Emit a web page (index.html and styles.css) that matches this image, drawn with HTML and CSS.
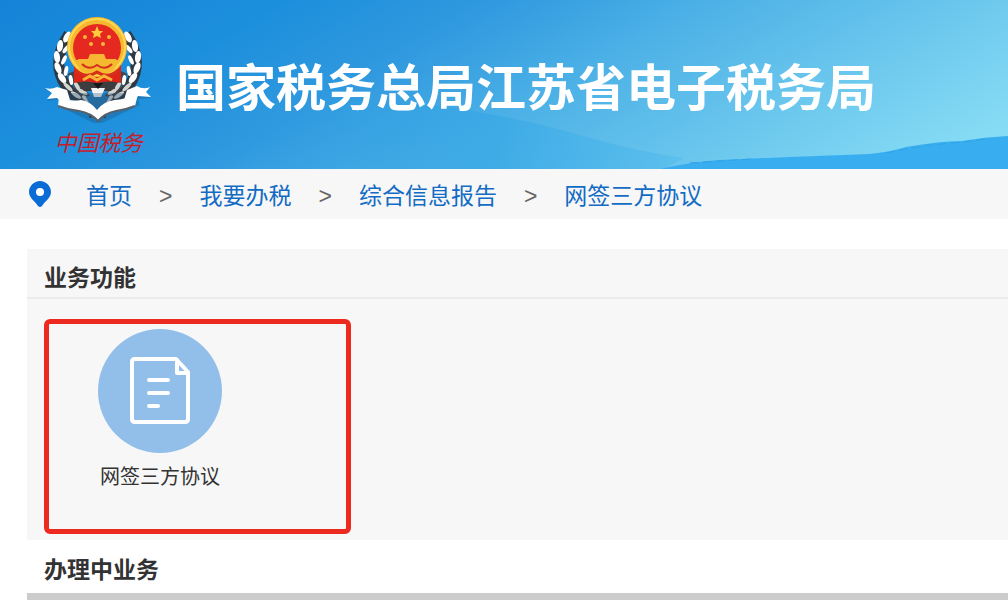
FILE: index.html
```html
<!DOCTYPE html>
<html lang="zh-CN">
<head>
    <meta charset="UTF-8">
    <meta name="viewport" content="width=device-width, initial-scale=1.0">
    <title>国家税务总局江苏省电子税务局</title>
    <link rel="stylesheet" href="styles.css">
</head>
<body>

    <header class="header">
        <svg class="hills" viewBox="0 0 1008 169" preserveAspectRatio="none" aria-hidden="true">
            <defs>
                <linearGradient id="slope" x1="0" y1="0" x2="1" y2="0">
                    <stop offset="0" stop-color="#2b98df" stop-opacity="0"/>
                    <stop offset="0.6" stop-color="#36a6e5" stop-opacity="0.7"/>
                    <stop offset="1" stop-color="#5abfed" stop-opacity="0.8"/>
                </linearGradient>
            </defs>
            <path d="M200 169V110Q330 92 440 106Q520 117 590 138Q640 152 684 158L664 169Z" fill="url(#slope)"/>
            <path d="M660 169Q690 162 720 160L790 157L870 154Q890 152 906 147Q940 141 962 141Q985 137 1008 136V169Z" fill="#38aef0"/>
            <path d="M690 163L720 161L752 159M886 153L906 149L932 145L962 142L985 139" fill="none" stroke="#2fa3e6" stroke-width="1" stroke-dasharray="9 4"/>
        </svg>

        <div class="brand">
            <svg class="emblem" viewBox="0 0 107 106" aria-hidden="true">
                <defs>
                    <g id="wreath">
                        <path d="M24 17Q5 45 21 69Q32 86 62 96" fill="none" stroke="#2f3942" stroke-width="11"/>
                        <path d="M27 55Q36 78 52 94" fill="none" stroke="#43474b" stroke-width="9"/>
                        <g fill="#fff">
                            <ellipse cx="22" cy="20" rx="3" ry="6" transform="rotate(28 22 20)"/>
                            <ellipse cx="15" cy="29" rx="3" ry="6" transform="rotate(8 15 29)"/>
                            <ellipse cx="21" cy="32" rx="2" ry="5" transform="rotate(38 21 32)"/>
                            <ellipse cx="12" cy="40" rx="3" ry="6" transform="rotate(-8 12 40)"/>
                            <ellipse cx="19" cy="43" rx="2" ry="5" transform="rotate(25 19 43)"/>
                            <ellipse cx="13" cy="51" rx="3" ry="6" transform="rotate(-22 13 51)"/>
                            <ellipse cx="21" cy="54" rx="2" ry="5" transform="rotate(12 21 54)"/>
                            <ellipse cx="17" cy="61" rx="3" ry="6" transform="rotate(-36 17 61)"/>
                            <ellipse cx="26" cy="63" rx="2" ry="5" transform="rotate(-8 26 63)"/>
                        </g>
                        <g fill="#d3d3d0">
                            <ellipse cx="23" cy="70" rx="2" ry="6" transform="rotate(-48 23 70)"/>
                            <ellipse cx="32" cy="69" rx="2" ry="5" transform="rotate(-30 32 69)"/>
                            <ellipse cx="31" cy="78" rx="2" ry="6" transform="rotate(-56 31 78)"/>
                            <ellipse cx="38" cy="75" rx="2" ry="5" transform="rotate(-62 38 75)"/>
                            <ellipse cx="41" cy="82" rx="2" ry="5" transform="rotate(-50 41 82)"/>
                        </g>
                    </g>
                </defs>
                <use href="#wreath"/>
                <use href="#wreath" transform="translate(105 0) scale(-1 1)"/>
                <path d="M41 80Q52 75 64 80L60 88L52 93L45 88Z" fill="#2a79b3"/>
                <path d="M31 64H74L66 74H39Z" fill="#3b3d3f"/>
                <path d="M46 71H60L56 80H49Z" fill="#f4f4f4"/>
                <path d="M48 66L53 72L58 66Z" fill="#181818"/>

                <!-- national emblem -->
                <path d="M29 48H76V66Q64 63 52 66Q40 63 29 66Z" fill="#dd2419"/>
                <circle cx="52" cy="30" r="30" fill="#f5b92f"/>
                <circle cx="52" cy="30" r="28" fill="none" stroke="#ffd751" stroke-width="2"/>
                <circle cx="52" cy="31" r="24" fill="#e52920"/>
                <path d="M52 9L54 14H58L55 17L56 21L52 19L48 21L49 17L46 14H50Z" fill="#ffc93c"/>
                <g fill="#f8b435">
                    <circle cx="40" cy="20" r="2"/>
                    <circle cx="64" cy="20" r="2"/>
                    <circle cx="46" cy="27" r="2"/>
                    <circle cx="58" cy="27" r="2"/>
                    <path d="M43 42L45 37H59L61 42H71V46H33V42Z"/>
                </g>
                <path d="M29 43H75L68 54Q52 62 36 54Z" fill="#f5b92f"/>
                <path d="M37 47Q44 54 52 48Q60 54 67 47" fill="none" stroke="#d4301b" stroke-width="2"/>
                <path d="M31 54Q42 62 52 55Q62 62 73 54" fill="none" stroke="#d4301b" stroke-width="3"/>
                <path d="M38 63L45 59L52 63L59 59L67 63" fill="none" stroke="#f8b435" stroke-width="3"/>

                <!-- ribbon -->
                <path d="M2 84L16 82L14 89L32 98L53 108L76 97L95 88L93 82L106 81L96 76H10Z" fill="#1c4d75" opacity="0.3"/>
                <path d="M0 71Q6 73 12 70L22 73L25 83L16 85L12 81L2 82L7 76Z" fill="#fff"/>
                <path d="M105 70Q98 73 92 69L82 73L79 83L89 84L93 79L106 80L101 75Z" fill="#fff"/>
                <path d="M14 80Q25 85 36 83Q45 84 52 93Q59 84 70 83Q82 82 93 77L90 89Q80 93 71 94Q60 96 53 104Q46 96 34 94Q23 93 13 89Z" fill="#fff"/>
                <path d="M13 89Q23 93 34 94Q46 96 53 104Q60 96 71 94Q80 93 90 89" fill="none" stroke="#55616b" stroke-width="2"/>
            </svg>
            <span class="brand-name">中国税务</span>
        </div>

        <h1 class="title">国家税务总局江苏省电子税务局</h1>
    </header>

    <nav class="crumbs" aria-label="当前位置">
        <svg class="pin" viewBox="0 0 22 26" aria-hidden="true">
            <path d="M11 0C17 0 22 5 22 11C22 17 16 20 13 25Q11 27 9 25C6 20 0 17 0 11C0 5 5 0 11 0Z" fill="#0c6cd6"/>
            <circle cx="11" cy="11" r="4" fill="#fff"/>
        </svg>
        <ol>
            <li><a href="#">首页</a></li>
            <li><a href="#">我要办税</a></li>
            <li><a href="#">综合信息报告</a></li>
            <li><a href="#">网签三方协议</a></li>
        </ol>
    </nav>

    <main>
        <section class="panel">
            <h2>业务功能</h2>
            <div class="panel-body">
                <div class="tile">
                    <a href="#" class="service">
                        <svg viewBox="0 0 124 124" aria-hidden="true">
                            <circle cx="62" cy="62" r="62" fill="#92bfe9"/>
                            <g fill="none" stroke="#fff" stroke-width="4" stroke-linejoin="round" stroke-linecap="round">
                                <path d="M78 30H37Q34 30 34 33V90Q34 93 37 93H87Q90 93 90 90V43Z"/>
                                <path d="M79 31V44H90"/>
                                <path d="M51 51H70M51 64H70M51 77H60"/>
                            </g>
                        </svg>
                        <span>网签三方协议</span>
                    </a>
                </div>
            </div>
        </section>

        <section class="pending">
            <h2>办理中业务</h2>
        </section>
    </main>

</body>
</html>
```
FILE: styles.css
```css
*, *::after, *::before{
    margin: 0;
    padding: 0;
    box-sizing: border-box;
}
:root{
    --link-cl: #126bc4;
    --text-cl: #333;
    --panel-cl: #f7f7f7;
    --mark-cl: #ec2a1f;
}

body{
    background-color: #fff;
    color: var(--text-cl);
    font-family: "Noto Sans CJK SC", "Liberation Sans", sans-serif;
}
a{
    text-decoration: none;
}

/* header */
.header{
    position: relative;
    display: flex;
    align-items: center;
    gap: 24px;
    padding: 17px 45px 10px;
    background: linear-gradient(150deg, #1583d8 0%, #1c8fdc 22%, #3099df 38%, #4bb0e6 54%, #6ac6ed 74%, #86dcf4 94%);
}
.hills{
    position: absolute;
    top: 0;
    left: 0;
    width: 100%;
    height: 100%;
}
.brand{
    position: relative;
    display: flex;
    flex-direction: column;
    align-items: center;
}
.emblem{
    width: 107px;
    height: 106px;
}
.brand-name{
    font-size: 22px;
    font-style: italic;
    line-height: 36px;
    color: #c3202c;
}
.title{
    position: relative;
    padding-bottom: 8px;
    font-size: 50px;
    font-weight: bold;
    line-height: 60px;
    color: #fff;
}

/* breadcrumb */
.crumbs{
    display: flex;
    align-items: center;
    gap: 35px;
    min-height: 50px;
    padding: 0 29px;
    background-color: var(--panel-cl);
}
.pin{
    width: 22px;
    height: 26px;
}
.crumbs ol{
    display: flex;
    list-style: none;
    font-size: 23px;
    line-height: 32px;
}
.crumbs li + li::before{
    content: ">";
    margin: 0 27px;
    font-family: "Liberation Sans", sans-serif;
    font-size: 23px;
    line-height: 1;
    color: #666;
}
.crumbs a{
    color: var(--link-cl);
}
.crumbs a:hover{
    text-decoration: underline;
}

/* content */
main{
    padding: 30px 0 0 27px;
}
h2{
    padding: 0 17px;
    font-size: 23px;
    font-weight: bold;
}
.panel{
    background-color: var(--panel-cl);
}
.panel h2{
    padding-top: 10px;
    padding-bottom: 4px;
    line-height: 34px;
    border-bottom: 2px solid #ebebeb;
}
.panel-body{
    padding: 20px 17px 6px;
}
.tile{
    width: 307px;
    padding: 5px 49px 38px;
    border: 5px solid var(--mark-cl);
    border-radius: 6px;
}
.service{
    display: flex;
    flex-direction: column;
    align-items: center;
    gap: 8px;
    width: 124px;
    font-size: 20px;
    line-height: 30px;
    white-space: nowrap;
    color: var(--text-cl);
}
.service svg{
    width: 124px;
    height: 124px;
}
.pending h2{
    padding-top: 11px;
    padding-bottom: 8px;
    line-height: 34px;
    border-bottom: 7px solid #ccc;
}
```
